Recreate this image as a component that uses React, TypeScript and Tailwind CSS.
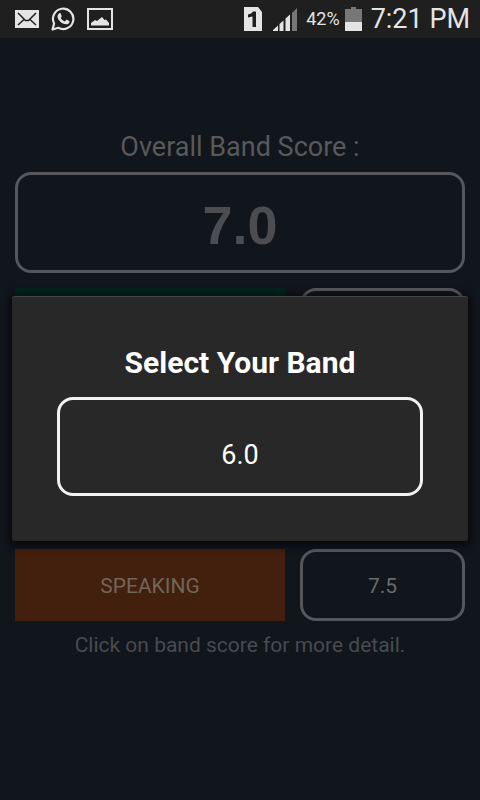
import React from "react";

const sections = [
  { name: "LISTENING", score: "7.0", color: "bg-[#03231a]" },
  { name: "READING", score: "7.0", color: "bg-[#14283a]" },
  { name: "WRITING", score: "6.0", color: "bg-[#3a2a10]" },
  { name: "SPEAKING", score: "7.5", color: "bg-[#431f0d]" },
];

function StatusBar() {
  return (
    <header className="flex h-[38px] items-center justify-between bg-[#1f1f1f] pr-[10px] pl-[15px] text-[#e4e4e4]">
      <div className="flex items-center gap-3">
        <svg width="24" height="18" viewBox="0 0 24 18" aria-label="Mail">
          <rect width="24" height="18" fill="#e4e4e4" />
          <path d="M3 3l7.500 7.500h3L21 3M3 15l6-5.500M21 15l-6-5.500" fill="none" stroke="#1f1f1f" strokeWidth="1.500" />
        </svg>
        <svg width="24" height="24" viewBox="0 0 24 24" aria-label="WhatsApp">
          <path d="M1.500 22.500l1.600-6A10.200 10.200 0 1 1 7.300 20.800z" fill="none" stroke="#e4e4e4" strokeWidth="2.200" strokeLinejoin="round" />
          <path d="M8.400 6.200c.4-.2 1-.2 1.300.4l1 2.300c.1.400-.1.800-1 1.800.9 1.700 2.200 3 4.100 3.700l1.300-1.500c.3-.3.6-.3.900-.1l2.200 1.100c.4.200.4.500.3 1-.3 1.600-2 2.500-3.300 2.400-4.600-.6-8.200-4.200-8.700-7.400-.1-1.500.8-3.100 1.900-3.700z" fill="#e4e4e4" />
        </svg>
        <svg width="26" height="22" viewBox="0 0 26 22" aria-label="Picture">
          <rect x="1" y="1" width="24" height="20" fill="none" stroke="#e4e4e4" strokeWidth="2" />
          <path d="M4 17.500V15l4-3 2 1L15 9l2.500 3 1.500-.5 3 3.500v2.500z" fill="#e4e4e4" />
        </svg>
      </div>
      <div className="flex items-center">
        <svg width="20" height="24" viewBox="0 0 20 24" className="mr-2.5" aria-label="SIM 1">
          <path d="M1 0h14l4 5v19H1z" fill="#e4e4e4" />
          <path d="M5 7.500C7.500 7 9 6 10 4.500h3V20H9.500V9.500L5 10.500z" fill="#1f1f1f" />
        </svg>
        <svg width="25" height="24" viewBox="0 0 25 24" className="mr-2" aria-label="Signal">
          <path d="M0 24v-1l5-4.500V24zM6.500 24v-7l4-3.500V24zM12.500 24V11.500L17 7.500V24z" fill="#e4e4e4" />
          <path d="M19 24V6l5-5v23z" fill="#777" />
        </svg>
        <span className="mr-[5px] text-[18px] leading-6">42%</span>
        <svg width="17" height="24" viewBox="0 0 17 24" className="mr-[9px]" aria-label="Battery">
          <path d="M0 2h6V0h5v2h6v13H0z" fill="#777" />
          <path d="M0 15h17v9H0z" fill="#e4e4e4" />
        </svg>
        <span className="text-[27px] leading-8">7:21 PM</span>
      </div>
    </header>
  );
}

function BandDialog() {
  return (
    <div className="absolute inset-0 flex items-center px-3 pb-0.5">
      <section
        role="dialog"
        aria-labelledby="band-title"
        className="flex w-full flex-col rounded-[3px] border-t border-[#454545] bg-[#282828] px-[45px] pt-12 pb-[45px] shadow-[0_2px_8px_2px_rgba(0,0,0,0.7)]"
      >
        <h2 id="band-title" className="text-center text-[30px] leading-9 font-bold text-white">
          Select Your Band
        </h2>
        <button className="mt-4 h-[99px] rounded-[16px] border-3 border-[#f2f2f2] pt-[18px] text-[27px] leading-8 text-white">
          6.0
        </button>
      </section>
    </div>
  );
}

export default function App() {
  return (
    <div className="flex min-h-screen flex-col bg-[#11151c] font-['Roboto','Liberation_Sans',sans-serif]">
      <StatusBar />
      <div className="relative flex flex-1 flex-col">
        <main className="flex flex-col px-[15px] pt-[93px] text-[#58595b]">
          <h1 className="text-center text-[27px] leading-8">Overall Band Score :</h1>
          <button className="mt-[9px] h-[101px] rounded-[16px] border-3 border-[#55575b] pt-1 font-['Liberation_Sans',sans-serif] text-[54px] leading-[64px] font-bold text-[#4b4d50]">
            7.0
          </button>
          <ul className="mt-[15px] flex flex-col gap-[15px]">
            {sections.map((s) => (
              <li key={s.name} className="grid h-[72px] grid-cols-[18fr_11fr] gap-[15px] text-[21px] leading-6">
                <div className={`flex items-center justify-center pt-0.5 text-[#716659] ${s.color}`}>{s.name}</div>
                <button className="rounded-[16px] border-3 border-[#55575b] pt-0.5 text-[#696b6e]">{s.score}</button>
              </li>
            ))}
          </ul>
          <p className="mt-3 text-center text-[21px] leading-6 text-[#484b50]">Click on band score for more detail.</p>
        </main>
        <BandDialog />
      </div>
    </div>
  );
}
